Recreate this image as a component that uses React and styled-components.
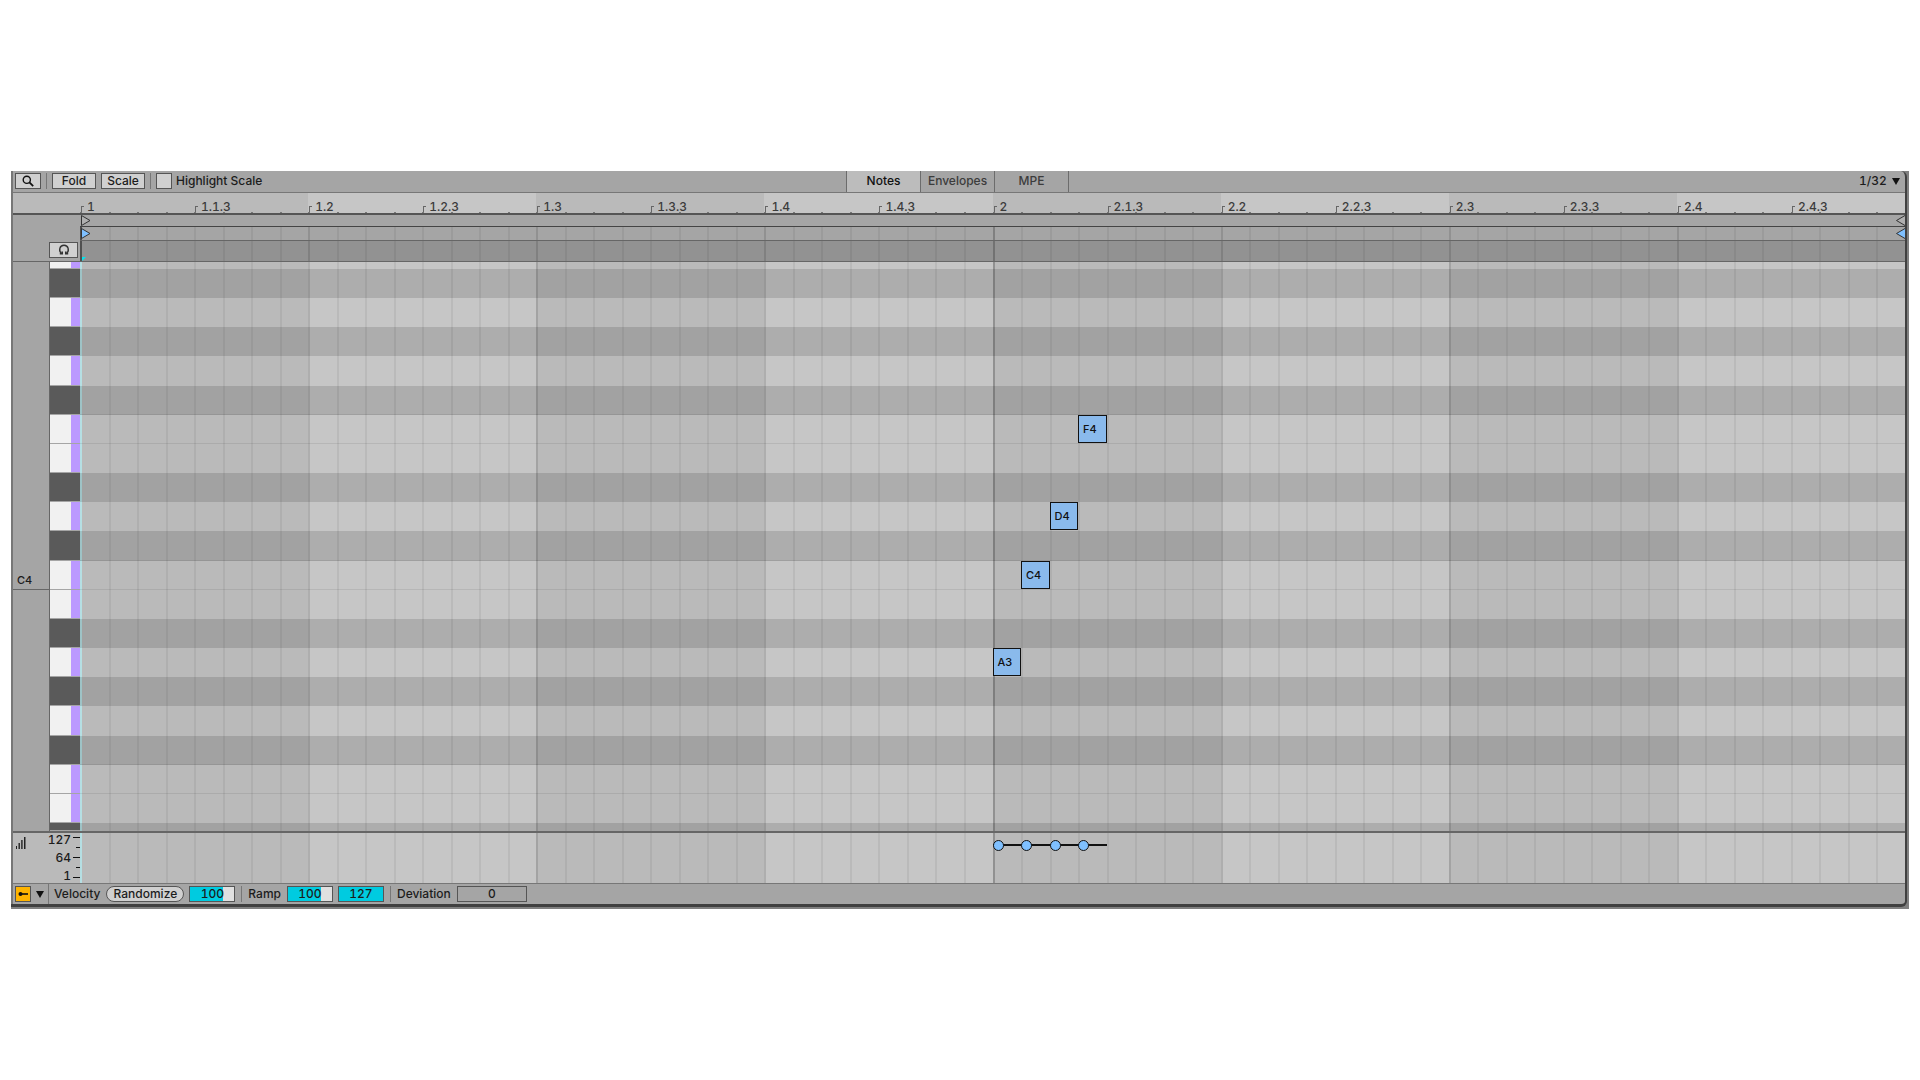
import { useState } from "react";
import styled, { createGlobalStyle, css } from "styled-components";

const KEYS = [
  "B4", "A#4", "A4", "G#4", "G4", "F#4", "F4", "E4", "D#4", "D4", "C#4",
  "C4", "B3", "A#3", "A3", "G#3", "G3", "F#3", "F3", "E3", "D#3",
];

const NOTES = [
  { name: "A3", step: 32 },
  { name: "C4", step: 33 },
  { name: "D4", step: 34 },
  { name: "F4", step: 35 },
];

const RULER = [
  "1", "1.1.3", "1.2", "1.2.3", "1.3", "1.3.3", "1.4", "1.4.3",
  "2", "2.1.3", "2.2", "2.2.3", "2.3", "2.3.3", "2.4", "2.4.3",
];

const BEATS = [0, 1, 2, 3, 4, 5, 6, 7];
const STEPS = [0, 1, 2, 3, 4, 5, 6, 7];
const TABS = ["Notes", "Envelopes", "MPE"];

const isBlack = (key) => key.includes("#");
// B/C and E/F sit next to each other without a black key between
const hasDivider = (key) => key[0] === "F" || key[0] === "C";

const BeatLines = () => (
  <Beats>
    {BEATS.map((beat) => (
      <Beat key={beat} $odd={beat % 2 === 1} $bar={beat === 4}>
        {STEPS.map((step) => (
          <Step key={step} />
        ))}
      </Beat>
    ))}
  </Beats>
);

const App = () => {
  const [tab, setTab] = useState("Notes");
  const [highlight, setHighlight] = useState(false);

  return (
    <>
      <GlobalStyle />
      <Frame>
        <Panel>
          <TopBar>
            <Group>
              <Button $width={26} aria-label="Search">
                <svg width="12" height="12" viewBox="0 0 12 12" fill="none" stroke="#111">
                  <circle cx="4.8" cy="4.8" r="3.6" strokeWidth="1.4" />
                  <path d="M7.4 7.4 L11.2 11.2" strokeWidth="1.8" />
                </svg>
              </Button>
              <Separator />
              <Button $width={44}>Fold</Button>
              <Button $width={44}>Scale</Button>
              <Separator />
              <CheckLabel>
                <CheckBox
                  type="checkbox"
                  checked={highlight}
                  onChange={(e) => setHighlight(e.target.checked)}
                />
                Highlight Scale
              </CheckLabel>
            </Group>
            <Tabs role="tablist">
              {TABS.map((name) => (
                <Tab
                  key={name}
                  role="tab"
                  aria-selected={tab === name}
                  $active={tab === name}
                  onClick={() => setTab(name)}
                >
                  {name}
                </Tab>
              ))}
            </Tabs>
            <GridSize>
              <GridSelect aria-label="Grid size" defaultValue="1/32">
                <option>1/16</option>
                <option>1/32</option>
              </GridSelect>
              <Caret />
            </GridSize>
          </TopBar>

          <RulerRow>
            <RulerGutter />
            <Ruler>
              {RULER.map((label, i) => (
                <Mark key={label} $odd={i % 4 > 1}>
                  <Bracket />
                  <MarkLabel>{label}</MarkLabel>
                  <Ticks>
                    <span />
                    <span />
                    <span />
                    <span />
                  </Ticks>
                </Mark>
              ))}
            </Ruler>
          </RulerRow>

          <Markers>
            <Preview>
              <Button $width={29} aria-label="Preview">
                <svg width="12" height="12" viewBox="0 0 12 12" fill="none" stroke="#333">
                  <path d="M3.5 9.5 C0.4 6.8 1.4 1.3 6 1.3 C10.6 1.3 11.6 6.8 8.5 9.5" strokeWidth="1.4" />
                  <path d="M1.8 9.8 H4.2 V7.4 M10.2 9.8 H7.8 V7.4" strokeWidth="1.6" />
                </svg>
              </Button>
            </Preview>
            <Lanes>
              <LoopLane>
                <Flag />
                <Flag $end />
              </LoopLane>
              <Lane>
                <BeatLines />
                <Flags>
                  <Flag $filled />
                  <Flag $end $filled />
                </Flags>
              </Lane>
              <ScrubLane>
                <BeatLines />
                <StartCorner />
              </ScrubLane>
            </Lanes>
          </Markers>

          <Roll>
            <Octaves>
              {KEYS.map((key) => (
                <Octave key={key} $line={key === "C4"}>
                  {key === "C4" && key}
                </Octave>
              ))}
            </Octaves>
            <Keyboard>
              {KEYS.map((key) => (
                <Key key={key} $black={isBlack(key)} />
              ))}
            </Keyboard>
            <Canvas>
              <BeatLines />
              <Rows>
                {KEYS.map((key) => (
                  <Row key={key} $black={isBlack(key)} $divider={hasDivider(key)} />
                ))}
              </Rows>
              <NoteLayer>
                {NOTES.map(({ name, step }) => (
                  <Note
                    key={name}
                    style={{ gridColumn: step + 1, gridRow: KEYS.indexOf(name) + 1 }}
                  >
                    {name}
                  </Note>
                ))}
              </NoteLayer>
            </Canvas>
          </Roll>

          <VelocityRow>
            <VelocitySide>
              <svg width="10" height="12" viewBox="0 0 10 12" fill="#222">
                <path d="M0 9h1v3h-1zM2.5 6h1.4v6h-1.4zM5.2 3h1.4v9h-1.4zM8 0h1.5v12h-1.5z" />
              </svg>
              <Scale>
                <span>127</span>
                <span>64</span>
                <span>1</span>
              </Scale>
              <ScaleTicks>
                <i />
                <i />
                <i />
                <i />
                <i />
              </ScaleTicks>
            </VelocitySide>
            <Canvas>
              <BeatLines />
              <VelocityLayer>
                {NOTES.map(({ name, step }) => (
                  <Stalk key={name} style={{ gridColumn: step + 1 }} />
                ))}
              </VelocityLayer>
            </Canvas>
          </VelocityRow>

          <BottomBar>
            <LaneToggle>
              <Button $width={16} $on aria-label="Show lane">
                <svg width="10" height="8" viewBox="0 0 10 8" fill="#111">
                  <circle cx="2.5" cy="4" r="2" />
                  <path d="M2 3.2h8v1.6h-8z" />
                </svg>
              </Button>
              <Caret />
            </LaneToggle>
            <FieldLabel htmlFor="velocity">Velocity</FieldLabel>
            <Pill>Randomize</Pill>
            <NumberBox id="velocity" $fill={75} defaultValue="100" />
            <Separator />
            <FieldLabel htmlFor="ramp">Ramp</FieldLabel>
            <NumberBox id="ramp" $fill={75} defaultValue="100" />
            <NumberBox aria-label="Ramp end" $fill={100} defaultValue="127" />
            <Separator />
            <FieldLabel htmlFor="deviation">Deviation</FieldLabel>
            <NumberBox id="deviation" $wide defaultValue="0" />
          </BottomBar>
        </Panel>
      </Frame>
    </>
  );
};

const GlobalStyle = createGlobalStyle`
  * {
    box-sizing: border-box;
  }

  body {
    margin: 0;
    background: #fff;
    color: #1c1c1c;
    font: 500 12px/16px Inter, "Liberation Sans", sans-serif;
    font-variant-numeric: tabular-nums;
  }

  button, input, select {
    font: inherit;
    font-variant-numeric: inherit;
    color: inherit;
  }

  svg {
    display: block;
    flex: none;
  }
`;

const rows = css`
  display: grid;
  grid-template-rows: 7px repeat(19, 1fr) 8px;
`;

const steps = css`
  display: grid;
  grid-template-columns: repeat(64, 1fr);
`;

const Frame = styled.main`
  margin: 171px 11px 0;
  padding: 0 2px 2px 0;
  background: #808080;
`;

const Panel = styled.div`
  border: solid #404040;
  border-width: 0 2px 3px 0;
  border-radius: 0 6px 6px 0;
  box-shadow: inset 2px 0 #777;
  padding-left: 2px;
  background: #a5a5a5;
`;

const TopBar = styled.div`
  display: grid;
  grid-template-columns: 1fr auto 1fr;
  height: 22px;
  padding-right: 3px;
  border-bottom: 1px solid #777;
`;

const Group = styled.div`
  display: flex;
  align-items: center;
  gap: 5px;
  padding: 0 2px 1px;
`;

const Button = styled.button`
  display: flex;
  align-items: center;
  justify-content: center;
  width: ${({ $width }) => $width}px;
  height: 16px;
  padding: 0;
  border: 1px solid #555;
  background: ${({ $on }) => ($on ? "#ffb400" : "#d0d0d0")};
`;

const Separator = styled.span`
  width: 1px;
  height: 16px;
  background: #777;
`;

const CheckLabel = styled.label`
  display: flex;
  align-items: center;
  gap: 4px;
`;

const CheckBox = styled.input`
  appearance: none;
  width: 16px;
  height: 16px;
  margin: 0;
  border: 1px solid #555;
  background: #d0d0d0;

  &:checked {
    background: #ffb400;
  }
`;

const Tabs = styled.div`
  display: flex;
  border-left: 1px solid #6c6c6c;
`;

const Tab = styled.button`
  width: 74px;
  padding: 0 0 1px;
  border: 0;
  border-right: 1px solid #6c6c6c;
  background: ${({ $active }) => ($active ? "#bcbcbc" : "transparent")};
  color: ${({ $active }) => ($active ? "#111" : "#3c3c3c")};
`;

const GridSize = styled.div`
  display: flex;
  align-items: center;
  justify-content: flex-end;
  gap: 5px;
  padding: 0 2px 1px 0;
`;

const GridSelect = styled.select`
  appearance: none;
  padding: 0;
  border: 0;
  background: none;
`;

const Caret = styled.span`
  border: solid transparent;
  border-width: 7px 4px 0;
  border-top-color: #111;
`;

const RulerRow = styled.div`
  display: flex;
  height: 22px;
  border-bottom: 2px solid #555;
`;

const RulerGutter = styled.div`
  flex: none;
  width: 67px;
  background: #bababa;
`;

const Ruler = styled.div`
  flex: 1;
  display: flex;
`;

const Mark = styled.div`
  flex: 1;
  min-width: 0;
  display: grid;
  grid-template-columns: 4px 1fr;
  grid-template-rows: 19px 1px;
  column-gap: 3px;
  background: ${({ $odd }) => ($odd ? "#c6c6c6" : "#bababa")};
  color: #3c3c3c;
`;

const Bracket = styled.span`
  grid-area: 1 / 1 / 3 / 2;
  align-self: end;
  height: 7px;
  width: 3px;
  margin-left: 1px;
  border: solid #666;
  border-width: 1px 0 0 1px;
`;

const MarkLabel = styled.span`
  grid-area: 1 / 2;
  padding-top: 6px;
`;

const Ticks = styled.div`
  grid-area: 2 / 1 / 3 / 3;
  display: flex;

  span {
    flex: 1;
    border-left: 2px solid #777;
  }
`;

const Markers = styled.div`
  display: flex;
  border-bottom: 1px solid #666;
`;

const Preview = styled.div`
  flex: none;
  width: 67px;
  display: flex;
  align-items: flex-end;
  justify-content: flex-end;
  padding: 0 2px 3px 0;
`;

const Lanes = styled.div`
  flex: 1;
`;

const Beats = styled.div`
  grid-area: 1 / 1;
  display: flex;
`;

const Step = styled.div`
  flex: 1;
  border-left: 2px solid rgba(0, 0, 0, 0.06);
`;

const Beat = styled.div`
  flex: 1;
  display: flex;
  background: ${({ $odd }) => ($odd ? "#c6c6c6" : "#bababa")};

  ${Step}:first-child {
    border-color: rgba(0, 0, 0, ${({ $bar }) => ($bar ? 0.22 : 0.12)});
  }
`;

const Lane = styled.div`
  display: grid;
  height: 14px;
  border-bottom: 1px solid #666;

  ${Beat} {
    background: #a5a5a5;
  }

  ${Beat}:first-child ${Step}:first-child {
    border-color: #505050;
  }
`;

const ScrubLane = styled(Lane)`
  height: 20px;
  border-bottom: 0;

  ${Beat} {
    background: #929292;
  }
`;

const LoopLane = styled.div`
  display: flex;
  justify-content: space-between;
  height: 12px;
  border-bottom: 1px solid #444;
`;

const Flags = styled.div`
  grid-area: 1 / 1;
  display: flex;
  justify-content: space-between;
  align-items: center;
`;

const Flag = ({ $end, $filled }) => (
  <svg width="11" height="11" viewBox="0 0 11 11">
    <path
      d={$end ? "M11 0.5 L2.5 5.5 L11 10.5" : "M1.5 0.5 L10 5.5 L1.5 10.5 Z"}
      fill={$filled ? "#7fc0ff" : "#b0b0b0"}
      stroke="#333"
    />
  </svg>
);

const StartCorner = styled.span`
  grid-area: 1 / 1;
  place-self: end start;
  margin-left: 2px;
  border: solid transparent;
  border-width: 4px 4px 0 0;
  border-top-color: #00e5f0;
`;

const Roll = styled.div`
  display: flex;
  height: 569px;
`;

const Octaves = styled.div`
  ${rows}
  flex: none;
  width: 37px;
  border-right: 1px solid #666;
`;

const Octave = styled.div`
  display: flex;
  align-items: flex-end;
  padding: 0 4px 1px;
  font-size: 11px;
  border-bottom: ${({ $line }) => ($line ? "1px solid #666" : "0")};
`;

const Keyboard = styled.div`
  ${rows}
  flex: none;
  width: 30px;
`;

const Key = styled.div`
  border-bottom: 1px solid #a5a5a5;
  background: ${({ $black }) =>
    $black ? "#5a5a5a" : "linear-gradient(to right, #f1f1f1 21px, #bb99ff 21px)"};
`;

const Canvas = styled.div`
  flex: 1;
  display: grid;

  ${Beat}:first-child ${Step}:first-child {
    border-color: #b5dfe3;
  }
`;

const Rows = styled.div`
  ${rows}
  grid-area: 1 / 1;
`;

const Row = styled.div`
  background: ${({ $black }) => ($black ? "rgba(0, 0, 0, 0.125)" : "none")};
  border-bottom: ${({ $divider }) => ($divider ? "1px solid rgba(0, 0, 0, 0.08)" : "0")};
`;

const NoteLayer = styled.div`
  ${rows}
  ${steps}
  grid-area: 1 / 1;
`;

const Note = styled.div`
  display: flex;
  align-items: center;
  margin: 0 0 1px;
  padding-left: 4px;
  border: 1px solid #111;
  background: #8abaec;
  font-size: 11px;
  color: #111;
`;

const VelocityRow = styled.div`
  display: flex;
  height: 53px;
  border-top: 2px solid #666;
  border-bottom: 1px solid #777;
`;

const VelocitySide = styled.div`
  flex: none;
  display: flex;
  align-items: flex-start;
  width: 67px;
  padding: 4px 0 0 3px;
  background: #bababa;
`;

const Scale = styled.div`
  flex: 1;
  display: flex;
  flex-direction: column;
  gap: 2px;
  margin-top: -5px;
  text-align: right;
`;

const ScaleTicks = styled.div`
  display: flex;
  flex-direction: column;
  align-items: flex-end;
  gap: 9px;
  width: 9px;

  i {
    width: 4px;
    height: 1px;
    background: #111;
  }

  i:nth-child(odd) {
    width: 7px;
  }
`;

const VelocityLayer = styled.div`
  ${steps}
  grid-area: 1 / 1;
  padding-top: 11px;
`;

const Stalk = styled.div`
  height: 2px;
  background: #111;

  &::before {
    content: "";
    display: block;
    width: 9px;
    height: 9px;
    margin-top: -4px;
    border: 1px solid #111;
    border-radius: 50%;
    background: #7fc0ff;
  }
`;

const BottomBar = styled.div`
  display: flex;
  align-items: center;
  gap: 5px;
  height: 20px;

  ${Separator} {
    margin: 0 1px;
  }
`;

const LaneToggle = styled.div`
  display: flex;
  align-items: center;
  gap: 5px;
  width: 36px;
  height: 20px;
  padding-left: 2px;
  border-right: 1px solid #777;
`;

const FieldLabel = styled.label`
  padding-right: 1px;
`;

const Pill = styled.button`
  height: 16px;
  width: 78px;
  padding: 0;
  border: 1px solid #555;
  border-radius: 8px;
  background: #d0d0d0;
  line-height: 14px;
`;

const NumberBox = styled.input`
  width: ${({ $wide }) => ($wide ? 70 : 46)}px;
  height: 16px;
  padding: 0;
  border: 1px solid #555;
  background: ${({ $fill }) =>
    $fill ? `linear-gradient(to right, #00cbe0 ${$fill}%, #e0e0e0 ${$fill}%)` : "#a5a5a5"};
  text-align: center;
`;

export default App;
